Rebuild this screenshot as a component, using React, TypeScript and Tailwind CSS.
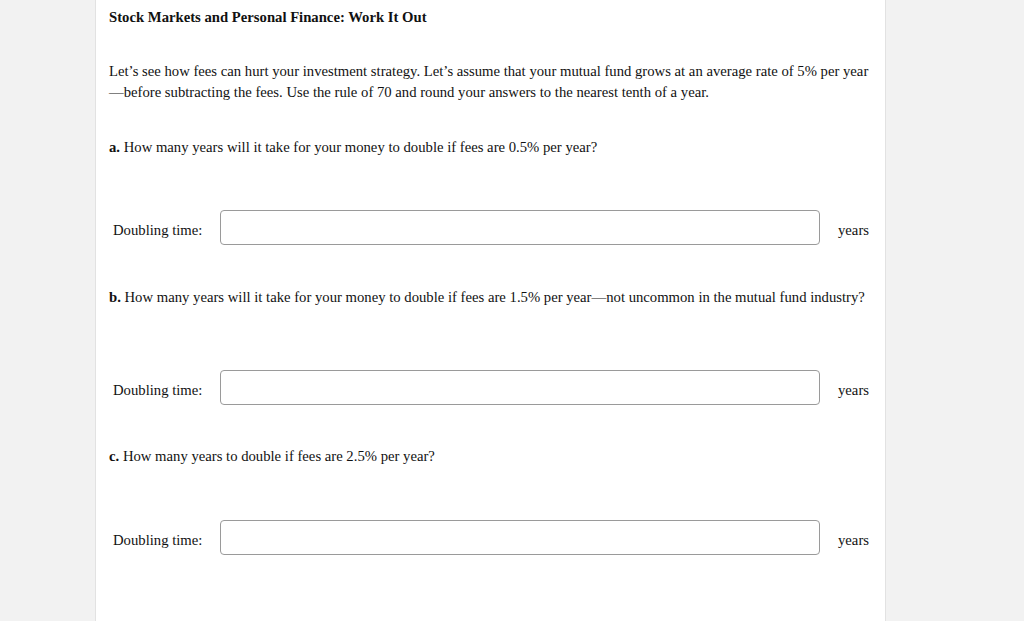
export default function App() {
  const serif = { fontFamily: '"Liberation Serif", "Times New Roman", serif' };

  const Row = () => (
    <div className="flex items-center h-[35px]">
      <div className="w-[111px] pl-[4px] pt-[5px] shrink-0">Doubling time:</div>
      <input
        type="text"
        className="w-[600px] h-[35px] border border-[#9a9a9a] rounded-[4px] bg-white outline-none"
      />
      <div className="pl-[18px] pt-[5px]">years</div>
    </div>
  );

  return (
    <div className="min-h-[621px] bg-[#f2f2f2] text-[14.7px] leading-[21px] text-[#111]" style={serif}>
      <div className="ml-[95px] w-[791px] min-h-[621px] bg-white border-x border-[#e2e2e2] px-[13px] pt-[7px]">
        <h1 className="font-bold">Stock Markets and Personal Finance: Work It Out</h1>

        <p className="mt-[33px]">
          Let’s see how fees can hurt your investment strategy. Let’s assume that your mutual fund grows at an average
          rate of 5% per year —before subtracting the fees. Use the rule of 70 and round your answers to the nearest
          tenth of a year.
        </p>

        <p className="mt-[34px]">
          <b>a.</b> How many years will it take for your money to double if fees are 0.5% per year?
        </p>
        <div className="mt-[52px]">
          <Row />
        </div>

        <p className="mt-[42px]">
          <b>b.</b> How many years will it take for your money to double if fees are 1.5% per year—not uncommon in the
          mutual fund industry?
        </p>
        <div className="mt-[62px]">
          <Row />
        </div>

        <p className="mt-[41px]">
          <b>c.</b> How many years to double if fees are 2.5% per year?
        </p>
        <div className="mt-[53px]">
          <Row />
        </div>
      </div>
    </div>
  );
}
